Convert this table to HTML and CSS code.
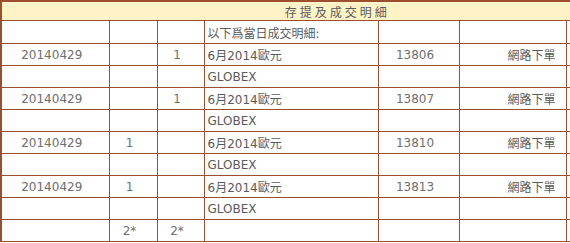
FILE: index.html
```html
<!DOCTYPE html>
<html>
<head>
<meta charset="utf-8">
<link rel="stylesheet" href="styles.css">
</head>
<body>
<table class="detail">
  <colgroup>
    <col class="c-date"><col class="c-buy"><col class="c-sell"><col class="c-item"><col class="c-no"><col class="c-src"><col class="c-extra">
  </colgroup>
  <tr class="head"><td colspan="7">存提及成交明細</td></tr>
  <tr class="first"><td></td><td></td><td></td><td class="item">以下爲當日成交明細:</td><td></td><td></td><td></td></tr>
  <tr><td class="ctr">20140429</td><td></td><td class="ctr">1</td><td class="item">6月2014歐元</td><td class="ctr">13806</td><td class="src">網路下單</td><td></td></tr>
  <tr><td></td><td></td><td></td><td class="item">GLOBEX</td><td></td><td></td><td></td></tr>
  <tr><td class="ctr">20140429</td><td></td><td class="ctr">1</td><td class="item">6月2014歐元</td><td class="ctr">13807</td><td class="src">網路下單</td><td></td></tr>
  <tr><td></td><td></td><td></td><td class="item">GLOBEX</td><td></td><td></td><td></td></tr>
  <tr><td class="ctr">20140429</td><td class="ctr">1</td><td></td><td class="item">6月2014歐元</td><td class="ctr">13810</td><td class="src">網路下單</td><td></td></tr>
  <tr><td></td><td></td><td></td><td class="item">GLOBEX</td><td></td><td></td><td></td></tr>
  <tr><td class="ctr">20140429</td><td class="ctr">1</td><td></td><td class="item">6月2014歐元</td><td class="ctr">13813</td><td class="src">網路下單</td><td></td></tr>
  <tr><td></td><td></td><td></td><td class="item">GLOBEX</td><td></td><td></td><td></td></tr>
  <tr><td></td><td class="ctr">2*</td><td class="ctr">2*</td><td></td><td></td><td></td><td></td></tr>
</table>
</body>
</html>
```

FILE: styles.css
```css
html, body {
  margin: 0;
  padding: 0;
  background: #ffffff;
}
body {
  font-family: "DejaVu Sans", Verdana, "Noto Sans CJK TC", sans-serif;
  font-size: 12px;
  color: #6e6e6e;
}
.detail {
  border-collapse: collapse;
  table-layout: fixed;
  width: 672px;
  border-left: 2px solid #9c4f2e;
  border-top: 2px solid #9c4f2e;
}
.c-date { width: 108px; }
.c-buy { width: 48px; }
.c-sell { width: 47px; }
.c-item { width: 174px; }
.c-no { width: 81px; }
.c-src { width: 107px; }
.c-extra { width: 107px; }
.detail td {
  border: 1px solid #9c4f2e;
  height: 21px;
  padding: 0;
  white-space: nowrap;
  overflow: hidden;
  font-family: "DejaVu Sans", "Noto Sans CJK TC", sans-serif;
}
.head td {
  background: #fdf3c6;
  text-align: center;
  letter-spacing: 3px;
  color: #5a5a5a;
  height: 18px;
}
.first td {
  height: 22px;
}
.detail .ctr {
  text-align: center;
  padding-right: 7px;
}
.detail .item {
  padding-left: 3px;
  color: #5a5a5a;
}
.detail .src {
  text-align: right;
  padding-right: 10px;
  color: #5a5a5a;
}
```
